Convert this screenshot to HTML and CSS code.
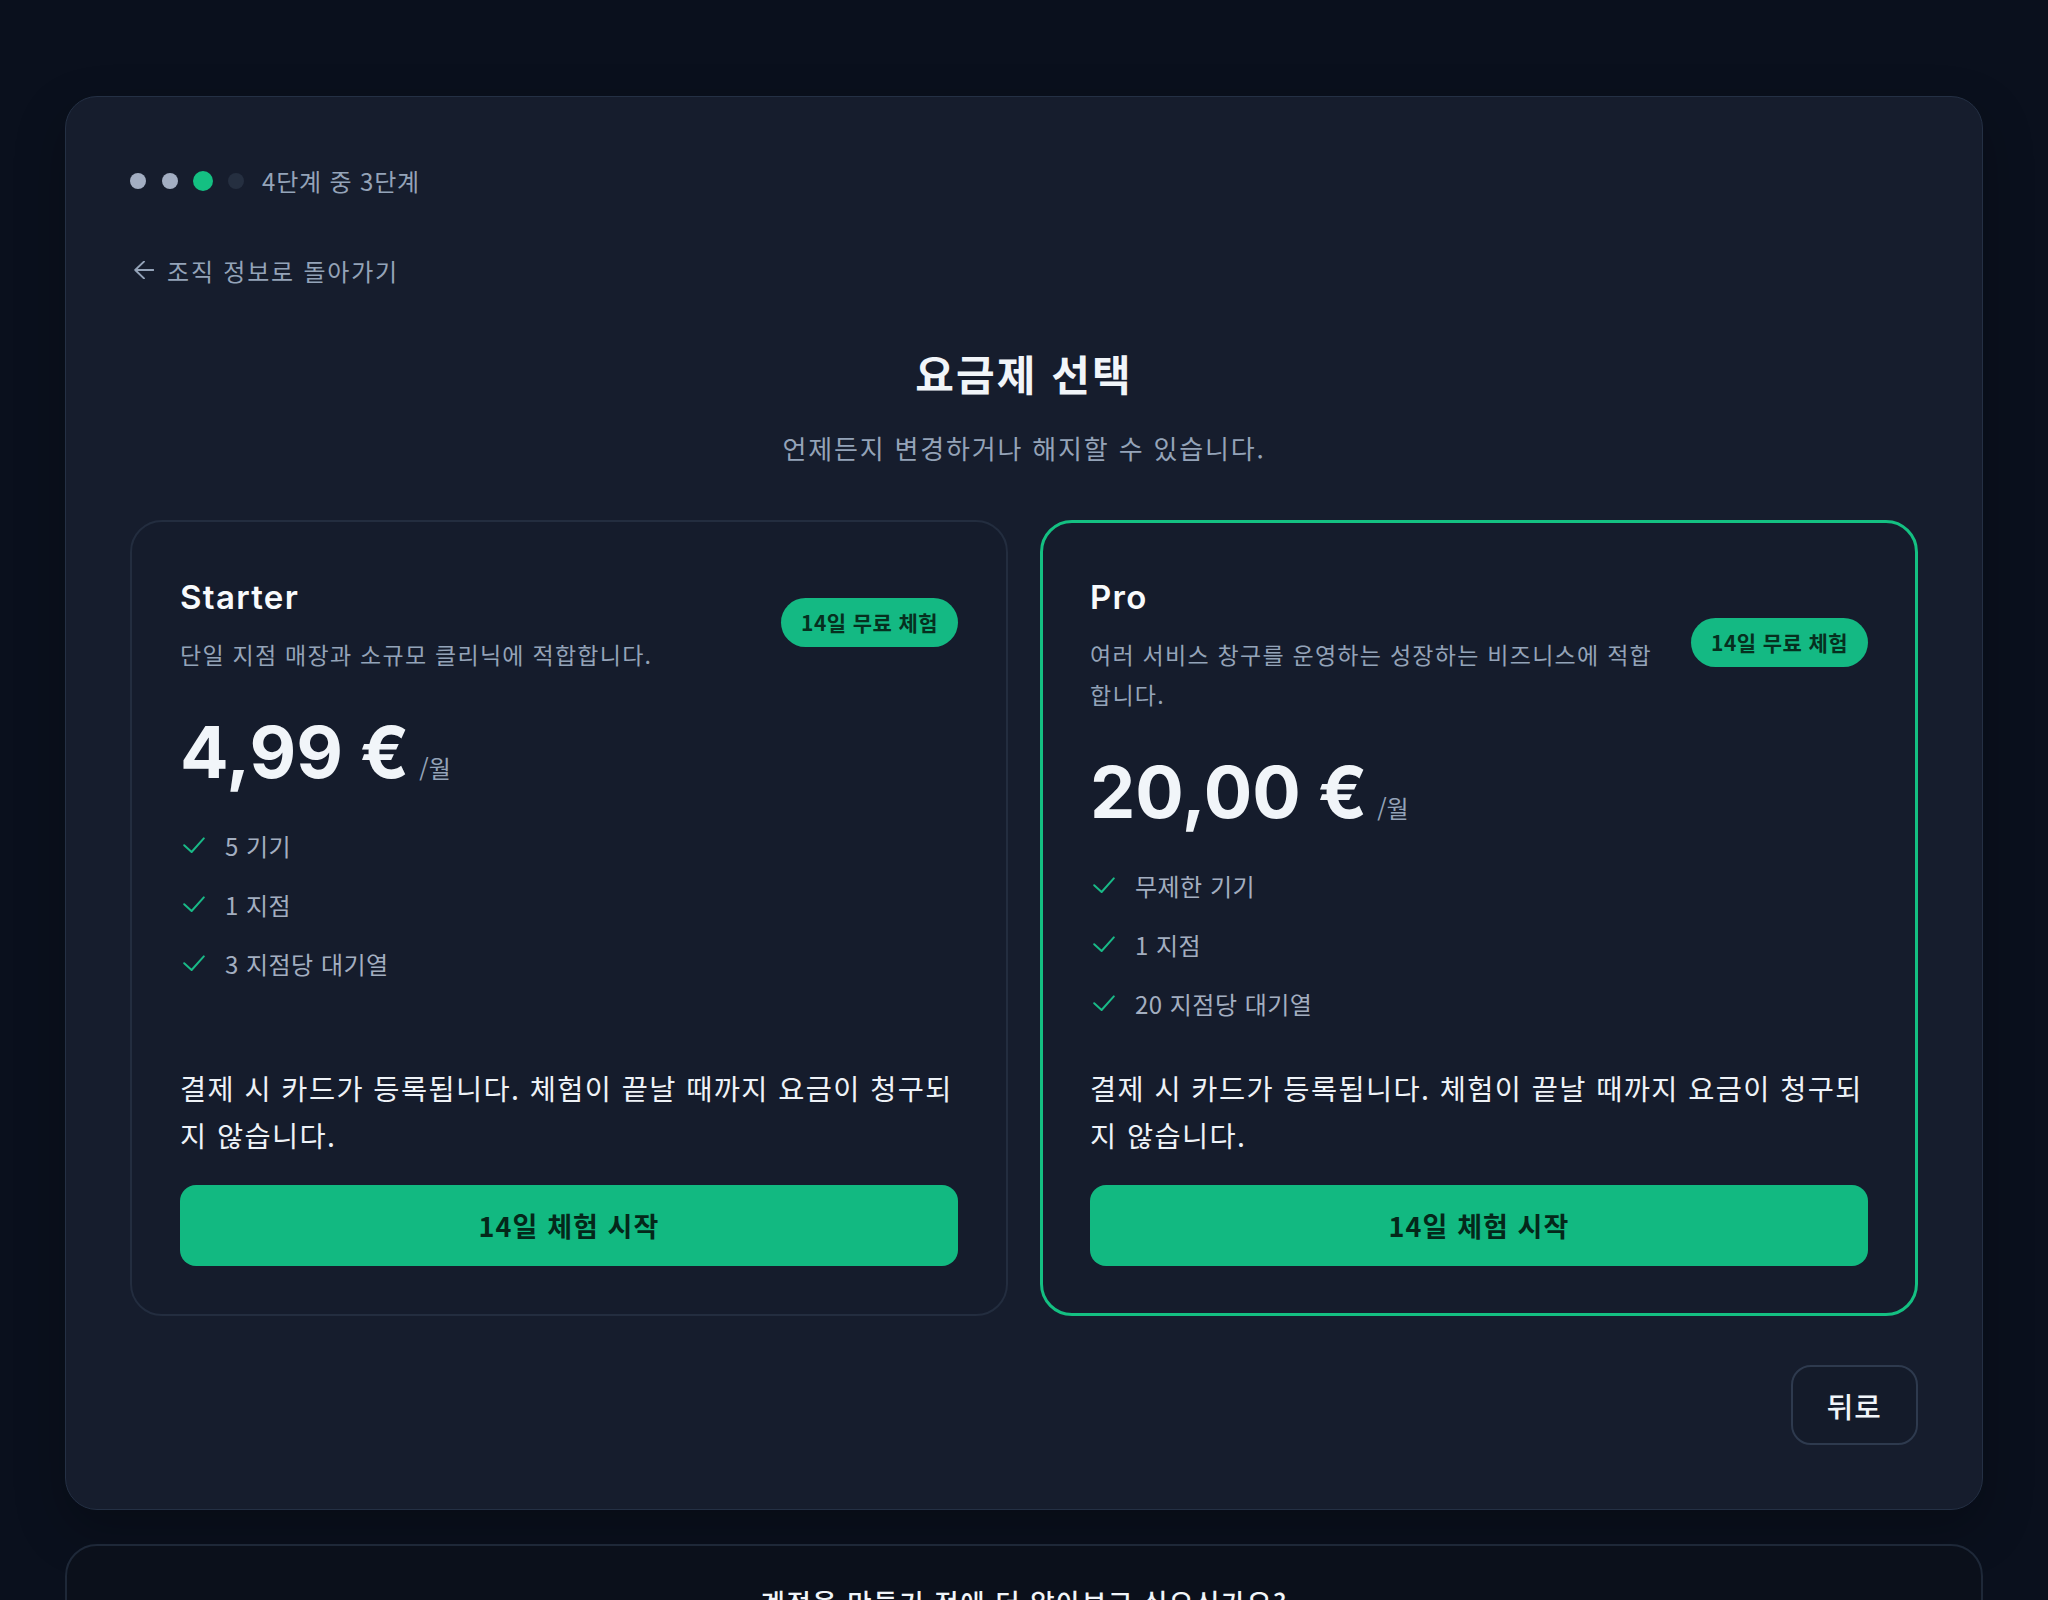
FILE: index.html
```html
<!DOCTYPE html>
<html lang="ko">
<head>
<meta charset="utf-8">
<title>요금제 선택</title>
<link rel="stylesheet" href="styles.css">
</head>
<body>
<main class="shell">
  <div class="steps">
    <span class="dot dot-done"></span>
    <span class="dot dot-done"></span>
    <span class="dot dot-current"></span>
    <span class="dot dot-todo"></span>
    <span class="step-label">4단계 중 3단계</span>
  </div>

  <a class="back-link" href="#">
    <svg class="back-icon" width="20" height="18" viewBox="0 0 20 18" aria-hidden="true"><path d="M1.2 9H19.5M10 0.6L1.2 9 10 17.4" fill="none" stroke="currentColor" stroke-width="1.9" stroke-linecap="round" stroke-linejoin="round"/></svg>
    <span>조직 정보로 돌아가기</span>
  </a>

  <header class="intro">
    <h1 class="intro-title">요금제 선택</h1>
    <p class="intro-sub">언제든지 변경하거나 해지할 수 있습니다.</p>
  </header>

  <div class="plans">
    <article class="plan">
      <div class="plan-head">
        <div class="plan-info">
          <h2 class="plan-name">Starter</h2>
          <p class="plan-desc">단일 지점 매장과 소규모 클리닉에 적합합니다.</p>
        </div>
        <span class="badge">14일 무료 체험</span>
      </div>
      <div class="price"><span class="amount">4,99 €</span><span class="per">/월</span></div>
      <ul class="features">
        <li class="feature"><svg class="check" width="22" height="16" viewBox="0 0 22 16"><path d="M1.2 8.2L8.6 15 20.8 1.4" fill="none" stroke="currentColor" stroke-width="2" stroke-linecap="round" stroke-linejoin="round"/></svg><span>5 기기</span></li>
        <li class="feature"><svg class="check" width="22" height="16" viewBox="0 0 22 16"><path d="M1.2 8.2L8.6 15 20.8 1.4" fill="none" stroke="currentColor" stroke-width="2" stroke-linecap="round" stroke-linejoin="round"/></svg><span>1 지점</span></li>
        <li class="feature"><svg class="check" width="22" height="16" viewBox="0 0 22 16"><path d="M1.2 8.2L8.6 15 20.8 1.4" fill="none" stroke="currentColor" stroke-width="2" stroke-linecap="round" stroke-linejoin="round"/></svg><span>3 지점당 대기열</span></li>
      </ul>
      <p class="note">결제 시 카드가 등록됩니다. 체험이 끝날 때까지 요금이 청구되지 않습니다.</p>
      <button class="cta" type="button">14일 체험 시작</button>
    </article>

    <article class="plan plan-featured">
      <div class="plan-head">
        <div class="plan-info">
          <h2 class="plan-name">Pro</h2>
          <p class="plan-desc">여러 서비스 창구를 운영하는 성장하는 비즈니스에 적합합니다.</p>
        </div>
        <span class="badge">14일 무료 체험</span>
      </div>
      <div class="price"><span class="amount">20,00 €</span><span class="per">/월</span></div>
      <ul class="features">
        <li class="feature"><svg class="check" width="22" height="16" viewBox="0 0 22 16"><path d="M1.2 8.2L8.6 15 20.8 1.4" fill="none" stroke="currentColor" stroke-width="2" stroke-linecap="round" stroke-linejoin="round"/></svg><span>무제한 기기</span></li>
        <li class="feature"><svg class="check" width="22" height="16" viewBox="0 0 22 16"><path d="M1.2 8.2L8.6 15 20.8 1.4" fill="none" stroke="currentColor" stroke-width="2" stroke-linecap="round" stroke-linejoin="round"/></svg><span>1 지점</span></li>
        <li class="feature"><svg class="check" width="22" height="16" viewBox="0 0 22 16"><path d="M1.2 8.2L8.6 15 20.8 1.4" fill="none" stroke="currentColor" stroke-width="2" stroke-linecap="round" stroke-linejoin="round"/></svg><span>20 지점당 대기열</span></li>
      </ul>
      <p class="note">결제 시 카드가 등록됩니다. 체험이 끝날 때까지 요금이 청구되지 않습니다.</p>
      <button class="cta" type="button">14일 체험 시작</button>
    </article>
  </div>

  <div class="actions">
    <button class="back-btn" type="button">뒤로</button>
  </div>
</main>

<section class="more">
  <h2 class="more-title">계정을 만들기 전에 더 알아보고 싶으신가요?</h2>
</section>
</body>
</html>
```

FILE: styles.css
```css
* { box-sizing: border-box; }

html, body {
  margin: 0;
  padding: 0;
}

body {
  background: #0a101d;
  font-family: "Noto Sans CJK KR", "Noto Sans", sans-serif;
  color: #f1f5f9;
  padding: 96px 65px 0;
  min-height: 1600px;
}

.shell {
  background: #161d2d;
  border: 1px solid #243044;
  border-radius: 32px;
  padding: 64px;
  box-shadow: 0 20px 50px rgba(0, 0, 0, 0.25);
}

/* steps */
.steps {
  display: flex;
  align-items: center;
  gap: 16px;
  height: 40px;
}

.dot {
  width: 16px;
  height: 16px;
  border-radius: 50%;
  flex: none;
}
.dot-done { background: #a3aec2; }
.dot-current { width: 20px; height: 20px; background: #14c082; margin: 0 -1px; }
.dot-todo { background: #252f40; }

.step-label {
  font-size: 24px;
  color: #94a3b8;
  margin-left: 2px;
  line-height: 40px;
  letter-spacing: 0.035em;
}

/* back link */
.back-link {
  display: inline-flex;
  align-items: center;
  gap: 13px;
  margin-top: 49px;
  height: 40px;
  color: #94a3b8;
  text-decoration: none;
  font-size: 24px;
  letter-spacing: 0.075em;
  padding-left: 4px;
}
.back-icon { flex: none; }

/* intro */
.intro {
  text-align: center;
  margin-top: 57px;
}
.intro-title {
  margin: 0;
  font-size: 42px;
  line-height: 52px;
  font-weight: 700;
  letter-spacing: 0.05em;
  color: #f1f5f9;
}
.intro-sub {
  margin: 29px 0 0;
  font-size: 26px;
  line-height: 40px;
  letter-spacing: 0.07em;
  color: #94a3b8;
}

/* plans */
.plans {
  display: grid;
  grid-template-columns: 1fr 1fr;
  gap: 32px;
  margin-top: 52px;
}

.plan {
  display: flex;
  flex-direction: column;
  border: 2px solid #232d3f;
  border-radius: 32px;
  padding: 48px;
  background: #151c2c;
}
.plan-featured {
  border: 3px solid #14c082;
  padding: 47px;
}

.plan-head {
  display: flex;
  align-items: center;
  justify-content: space-between;
  gap: 26px;
}
.plan-info { flex: 1; min-width: 0; }

.plan-name {
  margin: 0;
  font-family: Inter, "Noto Sans CJK KR", sans-serif;
  font-size: 33px;
  line-height: 54px;
  font-weight: 600;
  letter-spacing: 0.04em;
  color: #f8fafc;
}
.plan-desc {
  margin: 10px 0 0;
  font-size: 23px;
  line-height: 40px;
  letter-spacing: 0.055em;
  color: #94a3b8;
}

.badge {
  flex: none;
  display: inline-flex;
  align-items: center;
  height: 49px;
  padding: 0 20px;
  border-radius: 999px;
  background: #14b983;
  color: #06301f;
  font-size: 21px;
  font-weight: 700;
  letter-spacing: 0.02em;
}

.price {
  display: flex;
  align-items: baseline;
  gap: 10px;
  margin-top: 42px;
}
.amount {
  font-family: Inter, sans-serif;
  font-size: 72px;
  line-height: 72px;
  font-weight: 700;
  color: #f1f5f9;
  letter-spacing: 0;
}
.per {
  font-size: 24px;
  color: #94a3b8;
}

.features {
  list-style: none;
  margin: 38px 0 0;
  padding: 0;
  display: flex;
  flex-direction: column;
  gap: 21px;
  flex: 1;
}
.feature {
  display: flex;
  align-items: center;
  gap: 20px;
  height: 38px;
  font-size: 24px;
  letter-spacing: 0.02em;
  color: #a3aec0;
}
.check {
  flex: none;
  color: #19b987;
  margin-left: 3px;
}

.note {
  margin: 42px 0 0;
  font-size: 28.4px;
  line-height: 47px;
  letter-spacing: 0.05em;
  color: #eef2f7;
}

.cta {
  margin-top: 27px;
  height: 81px;
  width: 100%;
  border: none;
  border-radius: 16px;
  background: #12b981;
  color: #04281a;
  font-family: "Noto Sans CJK KR", sans-serif;
  font-size: 27px;
  font-weight: 700;
  letter-spacing: 0.04em;
  cursor: pointer;
}

/* actions */
.actions {
  display: flex;
  justify-content: flex-end;
  margin-top: 49px;
}
.back-btn {
  height: 80px;
  padding: 0 34px;
  border: 2px solid #2e3a4e;
  border-radius: 20px;
  background: #141b2a;
  color: #f1f5f9;
  font-family: "Noto Sans CJK KR", sans-serif;
  font-size: 28.8px;
  font-weight: 500;
  letter-spacing: 0.04em;
  cursor: pointer;
}

/* more */
.more {
  margin-top: 34px;
  background: #0b101b;
  border: 2px solid #1e2838;
  border-radius: 32px;
  padding: 36px 64px 60px;
  text-align: center;
}
.more-title {
  margin: 0;
  font-size: 26.5px;
  line-height: 40px;
  font-weight: 500;
  letter-spacing: 0.06em;
  color: #f1f5f9;
}
```
